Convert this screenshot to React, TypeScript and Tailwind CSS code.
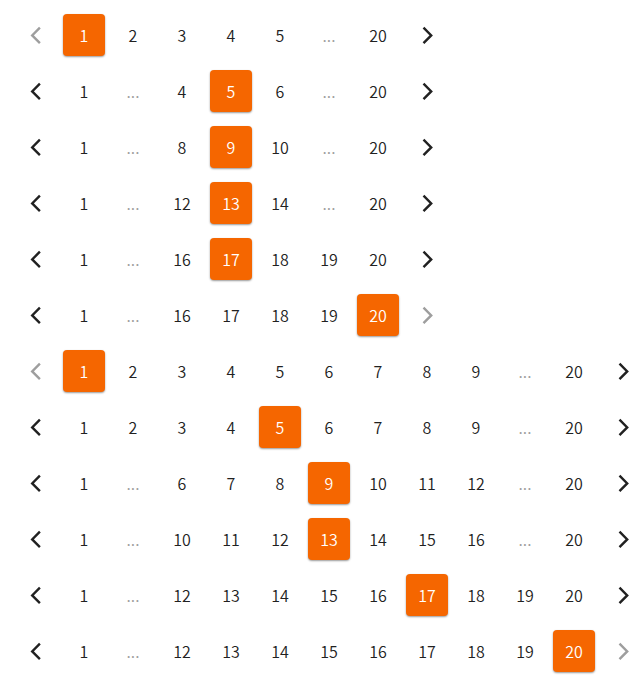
type Item = number | null;

interface Row {
  current: number;
  items: Item[];
}

const LAST_PAGE = 20;

const rows: Row[] = [
  { current: 1, items: [1, 2, 3, 4, 5, null, 20] },
  { current: 5, items: [1, null, 4, 5, 6, null, 20] },
  { current: 9, items: [1, null, 8, 9, 10, null, 20] },
  { current: 13, items: [1, null, 12, 13, 14, null, 20] },
  { current: 17, items: [1, null, 16, 17, 18, 19, 20] },
  { current: 20, items: [1, null, 16, 17, 18, 19, 20] },
  { current: 1, items: [1, 2, 3, 4, 5, 6, 7, 8, 9, null, 20] },
  { current: 5, items: [1, 2, 3, 4, 5, 6, 7, 8, 9, null, 20] },
  { current: 9, items: [1, null, 6, 7, 8, 9, 10, 11, 12, null, 20] },
  { current: 13, items: [1, null, 10, 11, 12, 13, 14, 15, 16, null, 20] },
  { current: 17, items: [1, null, 12, 13, 14, 15, 16, 17, 18, 19, 20] },
  { current: 20, items: [1, null, 12, 13, 14, 15, 16, 17, 18, 19, 20] },
];

const cell = "flex size-[42px] shrink-0 items-center justify-center rounded-[4px]";

function Arrow({ direction, disabled }: { direction: "previous" | "next"; disabled: boolean }) {
  return (
    <button
      type="button"
      aria-label={direction === "previous" ? "Previous page" : "Next page"}
      disabled={disabled}
      className={`${cell} ${disabled ? "text-[#9e9e9e]" : "cursor-pointer text-[#212121]"}`}
    >
      <svg
        viewBox="0 0 20 20"
        className="size-5"
        fill="none"
        stroke="currentColor"
        strokeWidth="2.4"
        aria-hidden="true"
      >
        {direction === "previous" ? (
          <path d="M14.9 2.7 7.2 10.4l7.7 7.7" />
        ) : (
          <path d="M6.5 2.7 14.2 10.4l-7.7 7.7" />
        )}
      </svg>
    </button>
  );
}

function Pagination({ current, items }: Row) {
  return (
    <nav aria-label="Pagination" className="flex gap-[7px]">
      <Arrow direction="previous" disabled={current === 1} />
      {items.map((page, index) =>
        page === null ? (
          <span key={index} className={`${cell} text-[#9e9e9e]`}>
            ...
          </span>
        ) : (
          <button
            key={index}
            type="button"
            aria-current={page === current ? "page" : undefined}
            className={`${cell} cursor-pointer ${
              page === current
                ? "bg-[#f56600] text-white shadow-[0_1px_2px_rgba(0,0,0,0.4)]"
                : "text-[#212121]"
            }`}
          >
            {page}
          </button>
        ),
      )}
      <Arrow direction="next" disabled={current === LAST_PAGE} />
    </nav>
  );
}

export default function App() {
  return (
    <main className="flex min-h-screen flex-col gap-[14px] bg-white pt-[14px] pl-[14px] font-['Noto_Sans_CJK_JP',sans-serif] text-base font-[350]">
      {rows.map((row, index) => (
        <Pagination key={index} {...row} />
      ))}
    </main>
  );
}
